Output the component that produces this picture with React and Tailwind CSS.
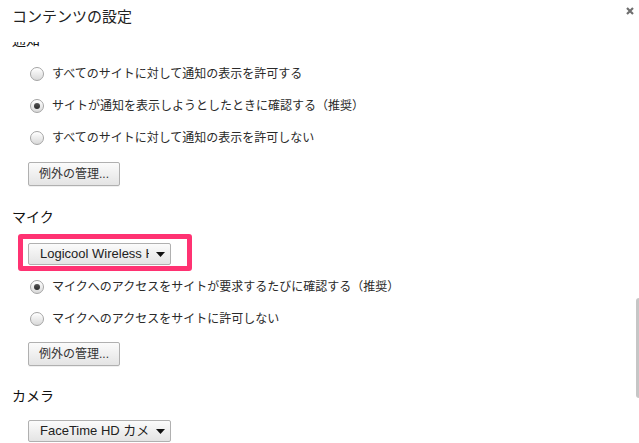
import React from "react";

const font = { fontFamily: '"Liberation Sans", "Noto Sans CJK JP", sans-serif' };

function Radio({ checked, label }) {
  return (
    <div className="flex h-8 items-center pl-[30px]">
      <span className="flex h-[14px] w-[14px] items-center justify-center rounded-full border border-[#a4a4a4] bg-gradient-to-b from-white to-[#d9d9d9] shadow-[inset_0_1px_0_#fff]">
        {checked && (
          <span className="h-[6px] w-[6px] rounded-full bg-gradient-to-b from-[#555] to-[#2a2a2a]" />
        )}
      </span>
      <span className="ml-2 text-[12px] leading-4 text-[#2a2a2a]">{label}</span>
    </div>
  );
}

function ExceptionsButton() {
  return (
    <div className="pl-[28px]">
      <button className="flex h-[24px] w-[92px] items-center justify-center rounded-[2px] border border-[#b0b0b0] bg-gradient-to-b from-[#fbfbfb] to-[#e4e4e4] text-[12px] leading-4 text-[#333] shadow-[0_1px_0_rgba(0,0,0,0.06)]">
        例外の管理...
      </button>
    </div>
  );
}

function Select({ label }) {
  return (
    <div className="flex h-[22px] w-[143px] items-center rounded-[2px] border border-[#b0b0b0] bg-gradient-to-b from-[#fbfbfb] to-[#e4e4e4] pl-[11px] pr-[5px]">
      <span className="w-[109px] overflow-hidden whitespace-nowrap text-[13px] leading-4 text-[#222]">
        {label}
      </span>
      <svg className="ml-auto" width="9" height="5" viewBox="0 0 9 5">
        <path d="M0 0 L9 0 L4.5 5 Z" fill="#111" />
      </svg>
    </div>
  );
}

function Heading({ children, className = "" }) {
  return (
    <div className={"h-5 pl-3 text-[14px] leading-5 text-[#111] " + className}>{children}</div>
  );
}

export default function App() {
  return (
    <div className="relative flex h-[443px] w-[639px] flex-col overflow-hidden bg-white" style={font}>
      <div className="flex h-[42px] shrink-0 items-start justify-between pl-3 pr-[5px] pt-[7px]">
        <h1 className="text-[15px] leading-5 text-[#222]">コンテンツの設定</h1>
        <svg className="mt-[0px]" width="8" height="8" viewBox="0 0 8 8">
          <path d="M1 1 L7 7 M7 1 L1 7" stroke="#6f6f6f" strokeWidth="2.2" />
        </svg>
      </div>

      <div className="flex-1 overflow-hidden">
        <div className="-mt-[12px]">
          <Heading>通知</Heading>
          <div className="mt-2">
            <Radio label="すべてのサイトに対して通知の表示を許可する" />
            <Radio checked label="サイトが通知を表示しようとしたときに確認する（推奨）" />
            <Radio label="すべてのサイトに対して通知の表示を許可しない" />
          </div>
          <div className="mt-2">
            <ExceptionsButton />
          </div>

          <Heading className="mt-[21px]">マイク</Heading>
          <div className="mt-4 pl-[28px]">
            <div className="relative w-[143px]">
              <Select label="Logicool Wireless Headset" />
              <div className="absolute -left-[10px] -right-[21px] -top-[9px] -bottom-[6px] rounded-[3px] border-[5px] border-[#ff3272]" />
            </div>
          </div>
          <div className="mt-[6px]">
            <Radio checked label="マイクへのアクセスをサイトが要求するたびに確認する（推奨）" />
            <Radio label="マイクへのアクセスをサイトに許可しない" />
          </div>
          <div className="mt-[7px]">
            <ExceptionsButton />
          </div>

          <Heading className="mt-5">カメラ</Heading>
          <div className="mt-[14px] pl-[28px]">
            <Select label="FaceTime HD カメラ（内蔵）" />
          </div>
        </div>
      </div>

      <div className="absolute right-0 top-[298px] h-[100px] w-[3px] rounded-l-full bg-[#c6c6c6]" />
    </div>
  );
}
